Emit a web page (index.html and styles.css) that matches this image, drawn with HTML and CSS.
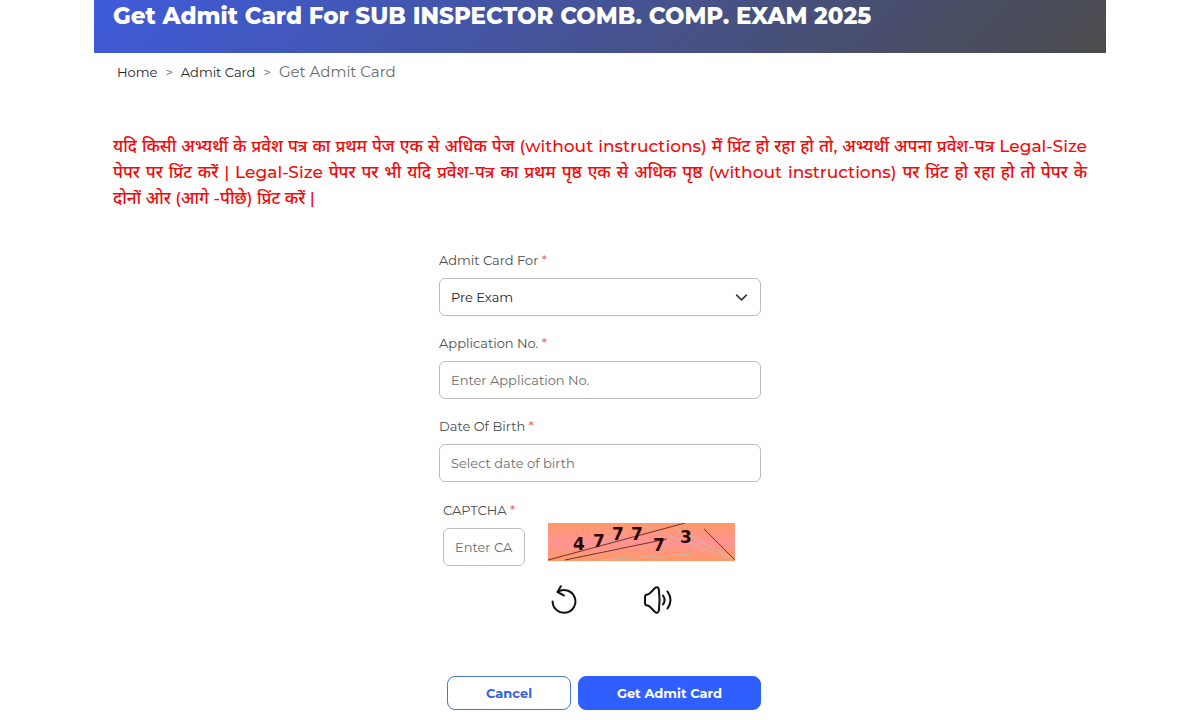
FILE: index.html
```html
<!DOCTYPE html>
<html lang="en">
<head>
    <meta charset="UTF-8">
    <meta name="viewport" content="width=device-width, initial-scale=1">
    <title>Get Admit Card</title>
    <link rel="stylesheet" href="styles.css">
</head>
<body>
    <div class="page">
        <header class="banner">
            <h1>Get Admit Card For SUB INSPECTOR COMB. COMP. EXAM 2025</h1>
        </header>

        <nav class="breadcrumb">
            <a href="#">Home</a>
            <span class="sep">&gt;</span>
            <a href="#">Admit Card</a>
            <span class="sep">&gt;</span>
            <span class="current">Get Admit Card</span>
        </nav>

        <p class="notice" lang="hi">यदि किसी अभ्यर्थी के प्रवेश पत्र का प्रथम पेज एक से अधिक पेज (without instructions) में प्रिंट हो रहा हो तो, अभ्यर्थी अपना प्रवेश-पत्र Legal-Size पेपर पर प्रिंट करें | Legal-Size पेपर पर भी यदि प्रवेश-पत्र का प्रथम पृष्ठ एक से अधिक पृष्ठ (without instructions) पर प्रिंट हो रहा हो तो पेपर के दोनों&nbsp;ओर (आगे -पीछे) प्रिंट करें |</p>

        <form class="admit-form">
            <div class="form-group">
                <label for="exam">Admit Card For <span class="required">*</span></label>
                <select id="exam" class="form-control">
                    <option>Pre Exam</option>
                </select>
            </div>

            <div class="form-group">
                <label for="appno">Application No. <span class="required">*</span></label>
                <input type="text" id="appno" class="form-control" placeholder="Enter Application No.">
            </div>

            <div class="form-group">
                <label for="dob">Date Of Birth <span class="required">*</span></label>
                <input type="text" id="dob" class="form-control" placeholder="Select date of birth">
            </div>

            <div class="captcha-row">
                <div class="captcha-input">
                    <label for="captcha">CAPTCHA <span class="required">*</span></label>
                    <input type="text" id="captcha" class="form-control" placeholder="Enter CAPTCHA">
                </div>
                <div class="captcha-side">
                    <svg class="captcha-image" viewBox="0 0 187 38" role="img" aria-label="Captcha">
                        <defs>
                            <linearGradient id="captchaBg" x1="0" y1="0" x2="0" y2="1">
                                <stop offset="0" stop-color="#ff9966"/>
                                <stop offset="0.5" stop-color="#ff9494"/>
                                <stop offset="1" stop-color="#ff9966"/>
                            </linearGradient>
                        </defs>
                        <rect width="187" height="38" fill="url(#captchaBg)"/>
                        <g fill="none" stroke="#cfb4aa">
                            <path d="M95 3L187 37"/>
                            <path d="M123 3L187 37"/>
                            <path d="M50 37L144 31"/>
                        </g>
                        <g fill="none" stroke="#6b3434">
                            <path d="M0 37L137 0"/>
                            <path d="M17 37L119 16"/>
                            <path d="M156 6L187 37"/>
                        </g>
                        <g class="captcha-digits">
                            <text x="25" y="27">4</text>
                            <text x="45" y="24">7</text>
                            <text x="64" y="17">7</text>
                            <text x="83" y="17">7</text>
                            <text x="105" y="28">7</text>
                            <text x="132" y="20">3</text>
                        </g>
                    </svg>
                    <div class="captcha-actions">
                        <button type="button" class="icon-btn" aria-label="Refresh captcha">
                            <svg viewBox="0 0 32 32">
                                <path d="M4.6 17.5A11.4 11.4 0 1 0 9.6 8"/>
                                <path d="M12.8 2.2L9.6 8L15.8 11.4"/>
                            </svg>
                        </button>
                        <button type="button" class="icon-btn" aria-label="Play captcha audio">
                            <svg viewBox="0 0 32 32">
                                <path d="M3 13Q3 10.6 5.4 10.4Q7 10.2 8.4 8.8L13 4Q15.6 2 16.8 5Q18.4 16 16.8 27Q15.6 30 13 28L8.4 23.2Q7 21.8 5.4 21.6Q3 21.4 3 19Z"/>
                                <path d="M21 11.5Q24.2 16 21 20.5"/>
                                <path d="M25.5 7.5Q31.5 16 25.5 24.5"/>
                            </svg>
                        </button>
                    </div>
                </div>
            </div>

            <div class="form-buttons">
                <button type="button" class="btn btn-outline">Cancel</button>
                <button type="submit" class="btn btn-primary">Get Admit Card</button>
            </div>
        </form>
    </div>
</body>
</html>
```
FILE: styles.css
```css
* { box-sizing: border-box; }

body {
    margin: 0;
    background: #fff;
    color: #4d4d4d;
    font-family: Montserrat, Inter, "Noto Sans", sans-serif;
    font-size: 13px;
    line-height: 20px;
}

.page {
    max-width: 1012px;
    margin: 0 auto;
}

/* banner + breadcrumb */
.banner {
    padding: 0 19px 20px;
    background: linear-gradient(135deg, #3f5bdb, #4b4b4b);
}
.banner h1 {
    margin: 0;
    color: #fff;
    font-size: 23px;
    font-weight: 800;
    line-height: 33px;
}

.breadcrumb {
    display: flex;
    align-items: baseline;
    gap: 8px;
    padding: 9px 23px 8px;
}
.breadcrumb a {
    color: #212529;
    text-decoration: none;
}
.breadcrumb .current {
    color: #6c6c6c;
    font-size: 15px;
}

.notice {
    margin: 43px 19px 39px;
    color: #f00a0a;
    font-size: 17px;
    font-weight: 500;
    line-height: 26px;
    text-align: justify;
}

/* form */
.admit-form {
    max-width: 322px;
    margin: 0 auto;
}
.form-group { margin-bottom: 17px; }

label {
    display: block;
    margin-bottom: 8px;
}
.required { color: #e8505b; }

.form-control {
    display: block;
    width: 100%;
    height: 38px;
    padding: 0 11px;
    border: 1px solid #bdbdbd;
    border-radius: 6px;
    background: #fff;
    color: #212529;
    font: inherit;
}
.form-control::placeholder {
    color: #6c6c6c;
    opacity: 1;
}
select.form-control {
    appearance: none;
    background: #fff url("data:image/svg+xml,%3Csvg xmlns='http://www.w3.org/2000/svg' viewBox='0 0 16 16'%3E%3Cpath fill='none' stroke='%23343a40' stroke-width='2' stroke-linecap='round' stroke-linejoin='round' d='m2 5 6 6 6-6'/%3E%3C/svg%3E") no-repeat right 12px center / 13px 13px;
}

.captcha-row {
    display: flex;
    gap: 23px;
    padding: 1px 4px 0;
}
.captcha-input { width: 82px; }
.captcha-image {
    display: block;
    width: 187px;
    height: 38px;
    margin-top: 23px;
}
.captcha-digits {
    fill: #2b0505;
    font-family: "DejaVu Sans", sans-serif;
    font-size: 17px;
    font-weight: 700;
}
.captcha-actions {
    display: flex;
    gap: 62px;
    margin-top: 23px;
}
.icon-btn {
    width: 32px;
    height: 32px;
    padding: 0;
    border: 0;
    background: none;
    cursor: pointer;
}
.icon-btn svg {
    display: block;
    fill: none;
    stroke: #111;
    stroke-width: 2;
    stroke-linecap: round;
    stroke-linejoin: round;
}

.form-buttons {
    display: flex;
    gap: 7px;
    margin-top: 60px;
    padding-left: 8px;
}
.btn {
    height: 34px;
    border: 1px solid #2f5fff;
    border-radius: 8px;
    font: inherit;
    font-weight: 700;
    cursor: pointer;
}
.btn-outline {
    width: 124px;
    border-color: #4a72e0;
    background: #fff;
    color: #3561dc;
}
.btn-primary {
    flex: 1;
    background: #2f5fff;
    color: #fff;
}
```
